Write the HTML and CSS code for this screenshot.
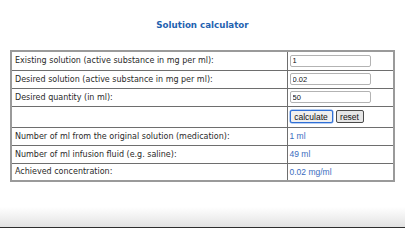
FILE: index.html
```html
<!DOCTYPE html>
<html lang="en">
<head>
<meta charset="utf-8">
<title>Solution calculator</title>
<link rel="stylesheet" href="styles.css">
</head>
<body>
<main class="page">
  <h1 class="title">Solution calculator</h1>
  <table class="calc">
    <tr>
      <td class="label">Existing solution (active substance in mg per ml):</td>
      <td class="value"><input class="field" type="text" value="1"></td>
    </tr>
    <tr>
      <td class="label">Desired solution (active substance in mg per ml):</td>
      <td class="value"><input class="field" type="text" value="0.02"></td>
    </tr>
    <tr>
      <td class="label">Desired quantity (in ml):</td>
      <td class="value"><input class="field" type="text" value="50"></td>
    </tr>
    <tr class="actions">
      <td class="label"></td>
      <td class="value"><div class="buttons"><button class="btn btn-primary" type="button">calculate</button><button class="btn btn-reset" type="button">reset</button></div></td>
    </tr>
    <tr>
      <td class="label">Number of ml from the original solution (medication):</td>
      <td class="value result">1 ml</td>
    </tr>
    <tr>
      <td class="label">Number of ml infusion fluid (e.g. saline):</td>
      <td class="value result">49 ml</td>
    </tr>
    <tr>
      <td class="label">Achieved concentration:</td>
      <td class="value result">0.02 mg/ml</td>
    </tr>
  </table>
  <div class="shade"></div>
</main>
</body>
</html>
```

FILE: styles.css
```css
html, body {
  margin: 0;
  padding: 0;
  background: #ffffff;
}

.page {
  display: flex;
  flex-direction: column;
  height: 228px;
  overflow: hidden;
}

.title {
  margin: 20px 0 0;
  height: 30px;
  font-family: "DejaVu Sans", Verdana, sans-serif;
  font-size: 8.7px;
  font-weight: bold;
  line-height: 10px;
  color: #1f62b0;
  text-align: center;
}

.calc {
  margin: 0 0 0 10px;
  width: 385px;
  border-collapse: collapse;
  border: 2px solid #9a9a9a;
}

.calc td {
  border: 1px solid #6e6e6e;
  height: 18px;
  padding: 0 3px;
  vertical-align: middle;
  box-sizing: border-box;
}

.calc tr:first-child td {
  height: 19px;
}

.calc .label {
  width: 276px;
  font-family: "DejaVu Sans", Verdana, sans-serif;
  font-size: 8px;
  color: #2a2a2a;
  padding-left: 3px;
}

.calc .value {
  padding-left: 2px;
}

.calc .actions td {
  height: 21px;
}

.field {
  display: block;
  box-sizing: border-box;
  width: 81px;
  height: 12px;
  margin: 0;
  padding: 0 2px;
  border: 1px solid #b3b3b3;
  border-radius: 2px;
  font-family: "Liberation Sans", Arial, sans-serif;
  font-size: 7.5px;
  color: #111;
  background: #fff;
}

.buttons {
  display: flex;
  gap: 3px;
}

.btn {
  box-sizing: border-box;
  height: 13px;
  margin: 0;
  padding: 0 3px;
  font-family: "Liberation Sans", Arial, sans-serif;
  font-size: 8.5px;
  line-height: 10px;
  color: #111;
  background: #efefef;
  border-radius: 2px;
}

.btn-primary {
  width: 43px;
  border: 1px solid #2f6fd6;
  box-shadow: 0 0 0 0.5px #6f9ee8;
}

.btn-reset {
  width: 28px;
  border: 1px solid #4a4a4a;
  background: #e6e6e6;
}

.result {
  font-family: "Liberation Sans", Arial, sans-serif;
  font-size: 8.5px;
  color: #3a6dc0;
}

.shade {
  margin-top: auto;
  height: 20px;
  background: linear-gradient(to bottom, #ffffff, #e2e2e2);
  border-bottom: 1px solid #2e2e2e;
}
```
